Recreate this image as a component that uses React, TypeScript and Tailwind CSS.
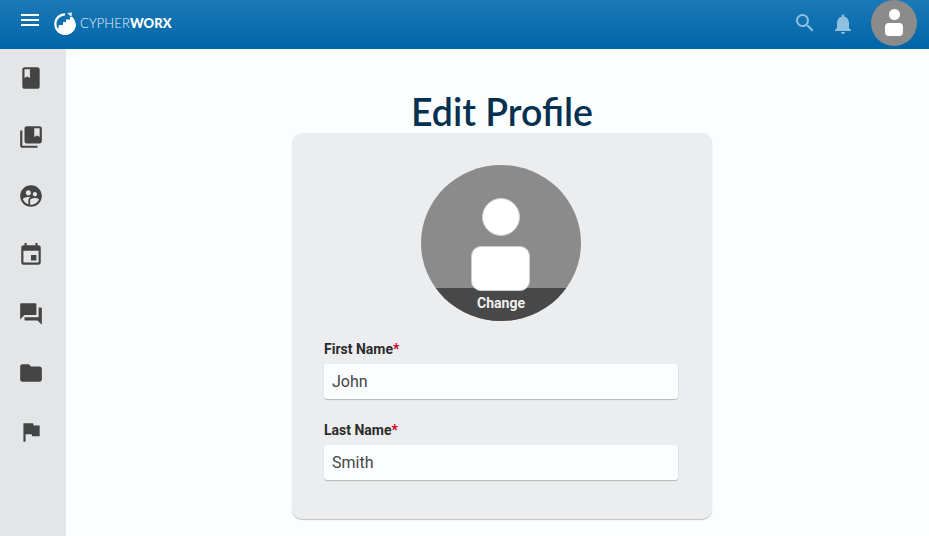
import { MdBook, MdCollectionsBookmark, MdSupervisedUserCircle, MdEvent, MdForum, MdFolder, MdFlag, MdSearch, MdNotifications, MdMenu } from "react-icons/md";

function Logo() {
  return (
    <svg width="24" height="24" viewBox="0 0 24 24" className="shrink-0">
      <path d="M12 1.2 A10.8 10.8 0 1 0 22.8 12 L20.6 12 A8.6 8.6 0 1 1 12 3.4 Z" fill="#fff" />
      <path d="M22.8 12 A10.8 10.8 0 0 1 4.5 19.8 L6 13 H10 V10 H13 V7.5 H17 V5 H19.5 L21.5 8 Z" fill="#fff" />
      <path d="M14 1 L19 0.5 L18.5 5 Z" fill="#dbe9f3" />
    </svg>
  );
}

function Avatar({ big }: { big?: boolean }) {
  if (big) {
    return (
      <div className="relative mx-auto w-[160px] h-[156px] rounded-[50%] bg-[#8b8b8b] overflow-hidden">
        <div className="absolute left-[61px] top-[33px] w-[38px] h-[38px] rounded-full bg-white border border-[#cfcfcf]" />
        <div className="absolute bottom-0 left-0 right-0 h-[33px] pb-[2px] bg-[#484848] flex items-center justify-center text-[14px] font-bold text-[#f1f1f1]">
          Change
        </div>
        <div className="absolute left-[50px] top-[81px] w-[59px] h-[45px] rounded-[10px] bg-white border border-[#cfcfcf]" />
      </div>
    );
  }
  return (
    <div className="relative w-[46px] h-[46px] rounded-full bg-[#8b8b8b]">
      <div className="absolute left-[18px] top-[9px] w-[11px] h-[11px] rounded-full bg-white" />
      <div className="absolute left-[14px] top-[23px] w-[18px] h-[13px] rounded-[4px] bg-white" />
    </div>
  );
}

function Field({ label, value, className }: { label: string; value: string; className?: string }) {
  return (
    <div className={className}>
      <div className="text-[14px] font-bold leading-[16px] text-[#2b2b2b]">
        {label}
        <span className="text-[#d0021b]">*</span>
      </div>
      <div className="mt-[7px] h-[35px] rounded-[3px] bg-[#fcfdff] pl-[8px] flex items-center text-[16px] text-[#444] shadow-[0_1px_1px_#b5b5b5,1px_0_1px_-1px_#b5b5b5]">
        {value}
      </div>
    </div>
  );
}

const items = [MdBook, MdCollectionsBookmark, MdSupervisedUserCircle, MdEvent, MdForum, MdFolder, MdFlag];

export default function App() {
  return (
    <div className="h-[536px] w-[929px] overflow-hidden flex flex-col bg-[#fcfdff] font-['Roboto',sans-serif]">
      <header className="h-[49px] shrink-0 flex items-center bg-gradient-to-b from-[#1a79b6] to-[#0066a9] text-white">
        <MdMenu className="ml-[18px] w-[24px] h-[24px] -mt-[10px]" />
        <div className="ml-[11px] flex items-center -mt-[2px]">
          <Logo />
          <span className="ml-[3px] text-[13px] tracking-[0.1px] font-['Lato',sans-serif] font-light text-[#e6f0f7]">
            CYPHER<span className="font-black text-white">WORX</span>
          </span>
        </div>
        <div className="ml-auto flex items-center text-[#8fc0e0]">
          <MdSearch className="w-[24px] h-[24px] -mt-[3px] translate-x-[1px]" />
          <MdNotifications className="ml-[15px] w-[24px] h-[24px] -mt-[1px]" />
          <div className="ml-[16px] mr-[12px] mb-[3px]">
            <Avatar />
          </div>
        </div>
      </header>
      <div className="flex flex-1 min-h-0">
        <aside className="w-[66px] shrink-0 bg-[#e3e5e7] flex flex-col items-center pt-[16px] gap-[33px] pr-[4px]">
          {items.map((I, i) => (
            <I key={i} className="w-[26px] h-[26px] text-[#444]" />
          ))}
        </aside>
        <main className="flex-1 flex flex-col items-center pl-[9px]">
          <h1 className="mt-[41px] h-[43px] text-[37.5px] leading-[43px] font-semibold text-[#03314f] font-['Lato',sans-serif]">
            Edit Profile
          </h1>
          <section className="w-[420px] h-[386px] rounded-[10px] bg-[#ecedef] pt-[32px] pl-[32px] pr-[34px] shadow-[0_1px_1px_#c0c0c0]">
            <Avatar big />
            <Field label="First Name" value="John" className="mt-[20px]" />
            <Field label="Last Name" value="Smith" className="mt-[23px]" />
          </section>
        </main>
      </div>
    </div>
  );
}
